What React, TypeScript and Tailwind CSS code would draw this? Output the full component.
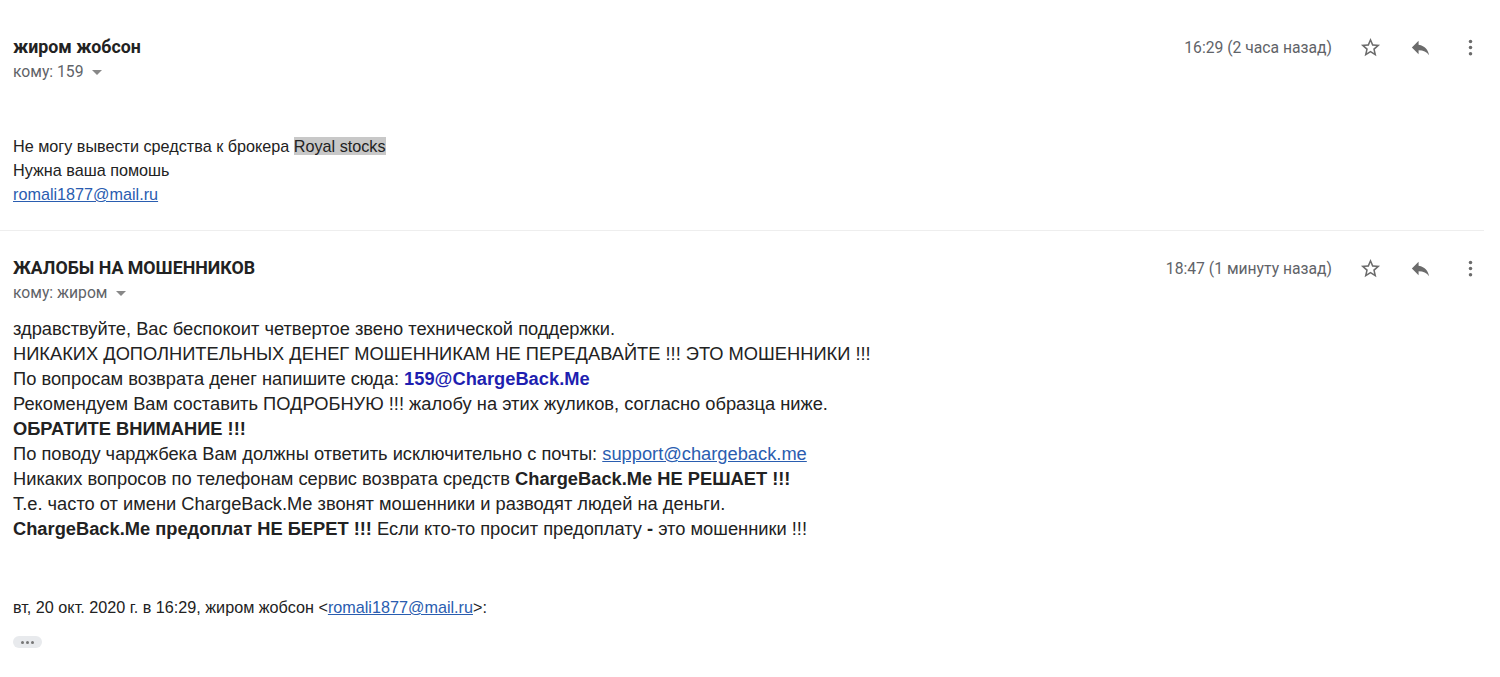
import React from "react";

const StarIcon = () => (
  <svg width="23" height="23" viewBox="0 0 24 24" fill="#6b6b6b">
    <path d="M22 9.24l-7.19-.62L12 2 9.19 8.63 2 9.24l5.46 4.73L5.82 21 12 17.27 18.18 21l-1.63-7.03L22 9.24zM12 15.4l-3.76 2.27 1-4.28-3.32-2.88 4.38-.38L12 6.1l1.71 4.04 4.38.38-3.32 2.88 1 4.28L12 15.4z" />
  </svg>
);

const ReplyIcon = () => (
  <svg width="23" height="23" viewBox="0 0 24 24" fill="#6b6b6b">
    <path d="M10 9V5l-7 7 7 7v-4.1c5 0 8.5 1.6 11 5.1-1-5-4-10-11-11z" />
  </svg>
);

const MoreIcon = () => (
  <svg width="21" height="21" viewBox="0 0 24 24" fill="#6b6b6b">
    <circle cx="12" cy="5" r="2" />
    <circle cx="12" cy="12" r="2" />
    <circle cx="12" cy="19" r="2" />
  </svg>
);

interface HeaderProps {
  name: string;
  to: string;
  time: string;
}

const MessageHeader = ({ name, to, time }: HeaderProps) => {
  return (
    <div className="flex items-start justify-between" style={{ fontFamily: "Roboto, Arial, sans-serif" }}>
      <div>
        <div className="text-[17.8px] font-bold text-[#222] leading-[22px]">{name}</div>
        <div className="mt-[3px] flex items-center text-[15.7px] text-[#5f6368] leading-[22px]">
          <span>кому: {to}</span>
          <span className="ml-[9px] inline-block w-0 h-0 border-l-[5px] border-r-[5px] border-t-[5px] border-l-transparent border-r-transparent border-t-[#888]" />
        </div>
      </div>
      <div className="flex items-center">
        <span className="text-[15.7px] text-[#5f6368] leading-[22px] mr-[13px]">{time}</span>
        <div className="w-[50px] flex justify-center"><StarIcon /></div>
        <div className="w-[50px] flex justify-center"><ReplyIcon /></div>
        <div className="w-[50px] flex justify-center"><MoreIcon /></div>
      </div>
    </div>
  );
};

const App = () => {
  return (
    <div className="w-[1500px] bg-white text-[#222] min-h-[677px]">
      <div className="pl-[13px] pr-[5px] pt-[36px] pb-[24px]">
        <MessageHeader name="жиром жобсон" to="159" time="16:29 (2 часа назад)" />
        <div className="mt-[51px] text-[16.2px] leading-[24px]" style={{ fontFamily: "'Liberation Sans', Arial, sans-serif" }}>
          <div>
            Не могу вывести средства к брокера <span className="bg-[#c8c8c8]">Royal stocks</span>
          </div>
          <div>Нужна ваша помошь</div>
          <div><a className="text-[#2a5db0] underline">romali1877@mail.ru</a></div>
        </div>
      </div>
      <div className="w-[1484px] h-px bg-[#eeeeee]" />
      <div className="pl-[13px] pr-[5px] pt-[26px]">
        <MessageHeader name="ЖАЛОБЫ НА МОШЕННИКОВ" to="жиром" time="18:47 (1 минуту назад)" />
        <div className="mt-[12px] text-[18.3px] leading-[25px]" style={{ fontFamily: "'Liberation Sans', Arial, sans-serif" }}>
          <div>здравствуйте, Вас беспокоит четвертое звено технической поддержки.</div>
          <div>НИКАКИХ ДОПОЛНИТЕЛЬНЫХ ДЕНЕГ МОШЕННИКАМ НЕ ПЕРЕДАВАЙТЕ !!! ЭТО МОШЕННИКИ !!!</div>
          <div>
            По вопросам возврата денег напишите сюда: <b className="text-[#1f1fb0]">159@ChargeBack.Me</b>
          </div>
          <div>Рекомендуем Вам составить ПОДРОБНУЮ !!! жалобу на этих жуликов, согласно образца ниже.</div>
          <div><b>ОБРАТИТЕ ВНИМАНИЕ !!!</b></div>
          <div>
            По поводу чарджбека Вам должны ответить исключительно с почты: <a className="text-[#2a5db0] underline">support@chargeback.me</a>
          </div>
          <div>
            Никаких вопросов по телефонам сервис возврата средств <b>ChargeBack.Me НЕ РЕШАЕТ !!!</b>
          </div>
          <div>Т.е. часто от имени ChargeBack.Me звонят мошенники и разводят людей на деньги.</div>
          <div>
            <b>ChargeBack.Me предоплат НЕ БЕРЕТ !!!</b> Если кто-то просит предоплату <b>-</b> это мошенники !!!
          </div>
        </div>
        <div className="mt-[55px] text-[16.2px] leading-[22px] text-[#222]" style={{ fontFamily: "'Liberation Sans', Arial, sans-serif" }}>
          вт, 20 окт. 2020 г. в 16:29, жиром жобсон &lt;<a className="text-[#2a5db0] underline">romali1877@mail.ru</a>&gt;:
        </div>
        <div className="mt-[18px] w-[29px] h-[12px] rounded-[6px] bg-[#e8eaed] flex items-center justify-center gap-[2px]">
          <span className="w-[3px] h-[3px] rounded-full bg-[#777]" />
          <span className="w-[3px] h-[3px] rounded-full bg-[#777]" />
          <span className="w-[3px] h-[3px] rounded-full bg-[#777]" />
        </div>
      </div>
    </div>
  );
};

export default App;
